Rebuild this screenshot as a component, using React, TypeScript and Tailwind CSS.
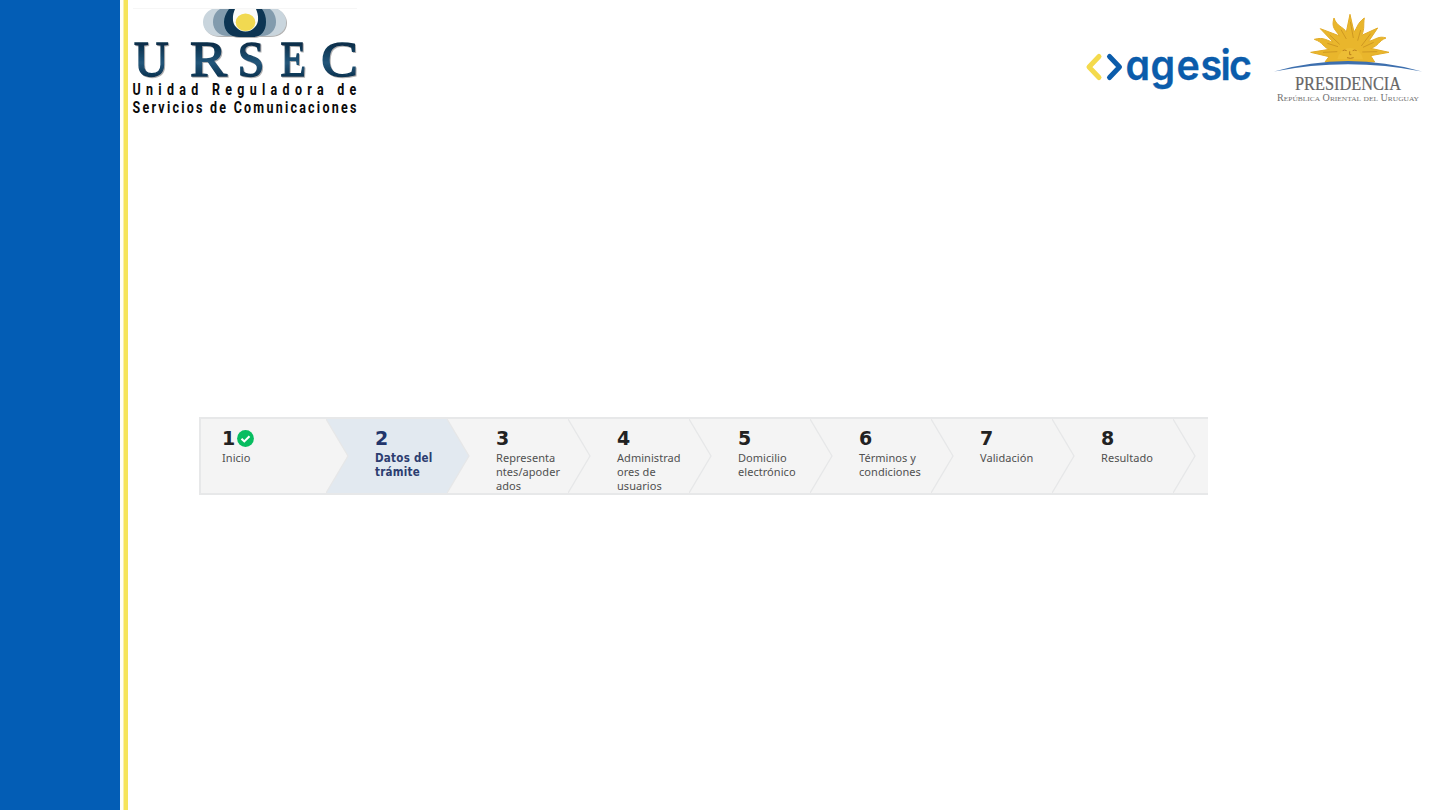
const steps = [
  { n: '1', lines: ['Inicio'], done: true },
  { n: '2', lines: ['Datos del', 'trámite'], active: true },
  { n: '3', lines: ['Representa', 'ntes/apoder', 'ados'] },
  { n: '4', lines: ['Administrad', 'ores de', 'usuarios'] },
  { n: '5', lines: ['Domicilio', 'electrónico'] },
  { n: '6', lines: ['Términos y', 'condiciones'] },
  { n: '7', lines: ['Validación'] },
  { n: '8', lines: ['Resultado'] },
];

const ursecLetters = [
  { c: 'U', x: 134, w: 34.5 },
  { c: 'R', x: 190, w: 37 },
  { c: 'S', x: 237.5, w: 27 },
  { c: 'E', x: 280.5, w: 25.5 },
  { c: 'C', x: 321, w: 37 },
];

function UrsecLogo() {
  return (
    <svg width="240" height="120" viewBox="128 0 240 120" role="img" aria-label="URSEC">
      <defs>
        <linearGradient id="navy" gradientUnits="userSpaceOnUse" x1="0" y1="42" x2="0" y2="77">
          <stop offset="0" stopColor="#062a45" />
          <stop offset="0.6" stopColor="#22567a" />
          <stop offset="1" stopColor="#0b3350" />
        </linearGradient>
        <filter id="soft" x="-10%" y="-10%" width="125%" height="130%">
          <feDropShadow dx="1" dy="1" stdDeviation="0.7" floodColor="#555" floodOpacity="0.45" />
        </filter>
      </defs>
      <path d="M133 8.500h224" stroke="#f6f6f6" />
      <g filter="url(#soft)">
        <path d="M212 9h66c5 3 8 8 8 13 0 8-6 14-17 14h-49c-11 0-17-6-17-14 0-6 4-11 9-13z" fill="#c9d5dd" />
        <path d="M220 9h50c4 3 6 8 6 13 0 8-6 14-14 14h-34c-9 0-15-6-15-14 0-6 3-11 7-13z" fill="#829bad" />
        <path d="M233 9h25v14c0 6-5 10-12.500 10s-12.500-4-12.500-10z" fill="#fbfbfa" />
        <path d="M229 9h6c-3 7-3 14 1 18 5 6 14 6 19 0 4-4 4-11 1-18h6c3 4 4 8 4 13 0 9-5 15-13 15h-14c-9 0-15-6-15-15 0-5 2-9 5-13z" fill="#083653" />
      </g>
      <ellipse cx="245.500" cy="22.300" rx="9.800" ry="8.800" fill="#f1d951" />
      <g fill="url(#navy)" stroke="url(#navy)" strokeWidth="1.400" filter="url(#soft)" fontFamily="'Liberation Serif', serif" fontSize="51.500">
        {ursecLetters.map((l) => (
          <text key={l.c} x={l.x} y="76.300" textLength={l.w} lengthAdjust="spacingAndGlyphs">{l.c}</text>
        ))}
      </g>
      <g fill="#0a0a0a" fontFamily="Roboto, sans-serif" fontWeight="700" fontSize="16">
        <text transform="translate(132.500 95) scale(.78 1)" textLength="287">Unidad Reguladora de</text>
        <text transform="translate(132.500 112.700) scale(.78 1)" textLength="287">Servicios de Comunicaciones</text>
      </g>
    </svg>
  );
}

function AgesicLogo() {
  return (
    <svg className="overflow-visible" width="170" height="60" viewBox="1084 40 170 60" role="img" aria-label="agesic">
      <g fill="none" strokeWidth="5" strokeLinecap="round" strokeLinejoin="round">
        <path d="M1099 56.500L1089 67l10 10.500" stroke="#f4da4c" />
        <path d="M1109.500 56.500L1119.500 67l-10 10.500" stroke="#0b5cab" />
      </g>
      <text transform="translate(1125.500 79.500) scale(.95 1)" x="0 26.300 53.700 79 100 109" fill="#0b5cab" stroke="#0b5cab" strokeWidth="0.300" fontFamily="Inter, sans-serif" fontWeight="600" fontSize="41.500" style={{ fontFeatureSettings: '"cv11" 1' }}>agesic</text>
    </svg>
  );
}

function PresidenciaLogo() {
  return (
    <svg width="156" height="100" viewBox="1270 10 156 100" role="img" aria-label="Presidencia">
      <g transform="translate(1305 10) scale(.3333)" strokeLinejoin="round">
        <path d="M60 156l12-16-55-13 56-9c-18-5-18-21-45-30 30-8 38 5 56 8L46 56l58 22c-12-18-26-24-17-54 8 26 28 26 37 42l11-53 12 53c12-16 8-24 31-42-4 24 2 30-8 52l48-22-27 40c20-4 30-18 52-10-22 8-22 24-46 31l55 12-55 10 12 19z" fill="#e9b62c" stroke="#e2ac27" strokeWidth="3" />
        <path d="M104 103l-30-28M124 87l-16-28M145 84l-9-49M158 92l9-32M169 108l28-37M172 126l45-1M97 125l-43 2M99 110l-32-10M174 112l32-15" stroke="#c9921f" strokeWidth="2.500" fill="none" />
        <path d="M97 148a39 40 0 0 1 77 0z" fill="#edbd35" />
        <path d="M113 122q6-4 12 0M143 122q6-4 12 0M134 124v10h5M126 143q10 4 20 0" stroke="#b87b1b" strokeWidth="3" fill="none" />
      </g>
      <path d="M1274 71.500q74-21 148 0q-74-14.500-148 0z" fill="#3d6fae" />
      <g fill="#666" fontFamily="'Liberation Serif', serif">
        <text x="1295" y="89.500" fontSize="19" textLength="106" lengthAdjust="spacingAndGlyphs" stroke="#666" strokeWidth="0.200">PRESIDENCIA</text>
        <text x="1277" y="101" fontSize="9.500" textLength="142" lengthAdjust="spacingAndGlyphs" fill="#707070" style={{ fontVariant: 'small-caps' }}>República Oriental del Uruguay</text>
      </g>
    </svg>
  );
}

function Stepper() {
  return (
    <nav className="flex h-[78px] w-[1009px] overflow-hidden border-y-2 border-l-2 border-[#e7e8e9] bg-[#f4f4f4] font-['Noto_Sans',sans-serif]">
      {steps.map((s, i) => (
        <div key={s.n} className={`relative shrink-0 pt-[7px] ${i === 0 ? 'w-[125px] pl-[21px]' : 'w-[121px] pl-[49px]'} ${s.active ? 'bg-[#e2e9f0]' : ''}`}>
          <div className={`relative z-10 flex h-[25px] items-center font-['DejaVu_Sans',sans-serif] text-[19px] font-bold ${s.active ? 'text-[#22356b]' : 'text-[#222]'}`}>
            {s.n}
            {s.done && (
              <svg className="-mt-px ml-[2px]" width="17" height="17" viewBox="0 0 17 17">
                <circle cx="8.500" cy="8.500" r="8.400" fill="#08bd60" />
                <path d="M4.500 8.700l2.800 2.700 5.200-5.200" fill="none" stroke="#fff" strokeWidth="2.100" />
              </svg>
            )}
          </div>
          <div className={`relative z-10 whitespace-nowrap leading-[14.2px] ${s.active ? "font-['DejaVu_Sans_Condensed','DejaVu_Sans',sans-serif] text-[11.5px] font-bold tracking-[0.25px] text-[#2c3d70] [font-stretch:condensed]" : 'text-[11px] tracking-[0.05px] text-[#505050]'}`}>
            {s.lines.map((l) => <div key={l}>{l}</div>)}
          </div>
          <svg className="absolute top-0 left-full z-10" width="24" height="74" viewBox="0 0 24 74">
            <path d="M0 0L22 37L0 74" fill={s.active ? '#e2e9f0' : '#f4f4f4'} stroke="#e6e7e8" strokeWidth="1.300" />
          </svg>
        </div>
      ))}
    </nav>
  );
}

export default function App() {
  return (
    <div className="flex h-[810px] w-[1440px] overflow-hidden bg-white">
      <aside className="w-[123px] shrink-0 border-r-[3px] border-[#fffef5] bg-[#035db5]" />
      <div className="w-[5px] shrink-0 border-l border-[#faf0a8] bg-[#f6e458]" />
      <main className="flex flex-1 flex-col">
        <header className="flex h-[120px] items-start">
          <UrsecLogo />
          <div className="ml-auto flex pr-[14px]">
            <div className="pt-10"><AgesicLogo /></div>
            <div className="pt-[10px] pl-4"><PresidenciaLogo /></div>
          </div>
        </header>
        <div className="pt-[297px] pl-[71px]"><Stepper /></div>
      </main>
    </div>
  );
}
